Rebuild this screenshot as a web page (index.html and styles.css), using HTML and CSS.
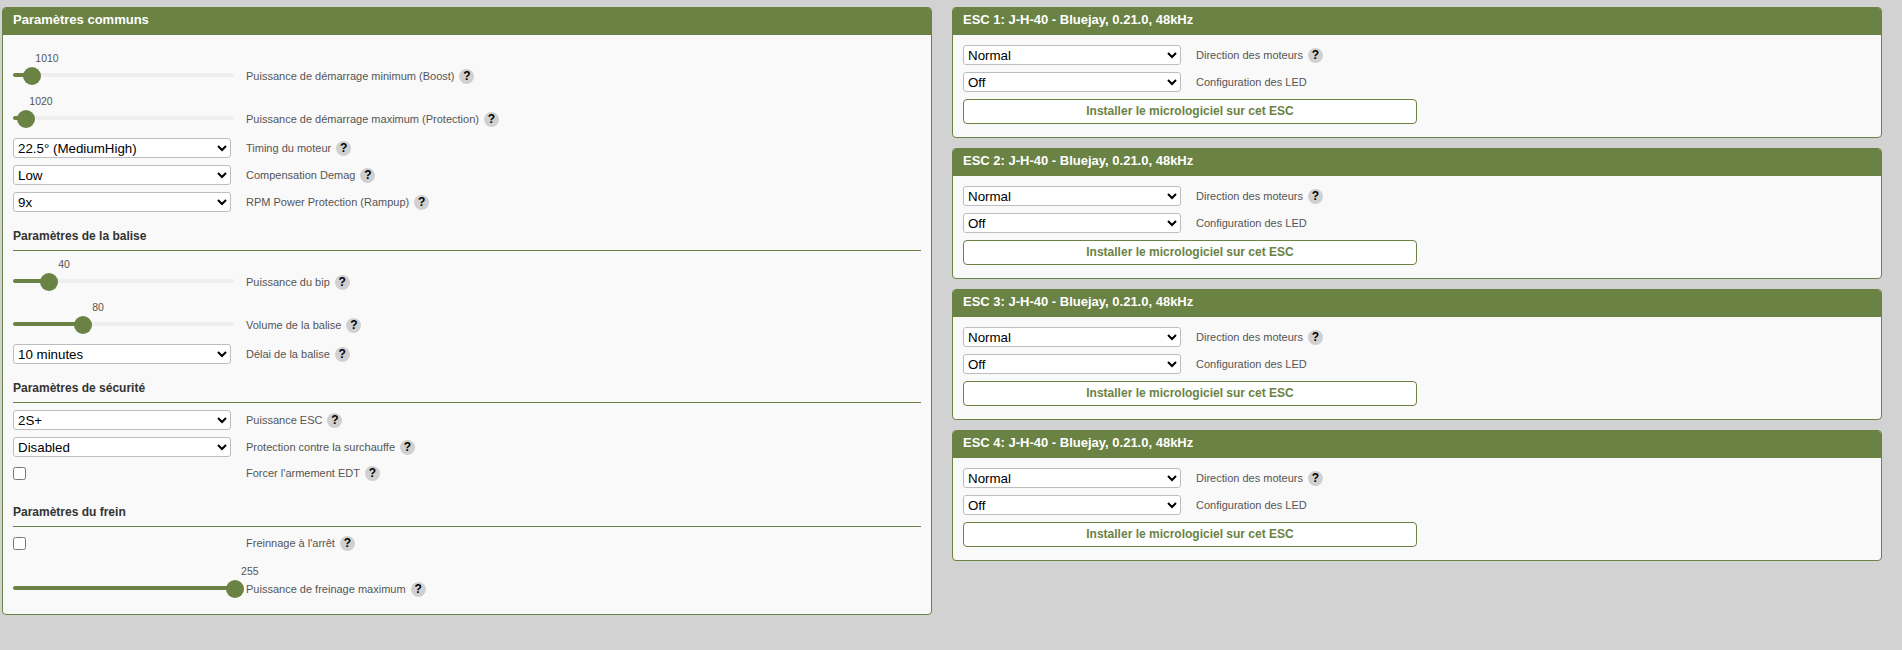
FILE: index.html
```html
<!DOCTYPE html>
<html lang="fr">
<head>
<meta charset="utf-8">
<title>Paramètres ESC</title>
<link rel="stylesheet" href="styles.css">
</head>
<body>
<main class="page">
  <section class="box">
    <h2 class="box-title">Paramètres communs</h2>
    <div class="box-body common">
      <div class="row row-slider"><div class="slider"><div class="track"></div><div class="fill" style="width:8.6%"></div><div class="thumb" style="left:8.6%"><span class="value">1010</span></div></div><span class="label">Puissance de démarrage minimum (Boost)</span><span class="help">?</span></div>
      <div class="row row-slider"><div class="slider"><div class="track"></div><div class="fill" style="width:5.9%"></div><div class="thumb" style="left:5.9%"><span class="value">1020</span></div></div><span class="label">Puissance de démarrage maximum (Protection)</span><span class="help">?</span></div>
      <div class="row"><select class="select"><option>22.5° (MediumHigh)</option></select><span class="label">Timing du moteur</span><span class="help">?</span></div>
      <div class="row"><select class="select"><option>Low</option></select><span class="label">Compensation Demag</span><span class="help">?</span></div>
      <div class="row"><select class="select"><option>9x</option></select><span class="label">RPM Power Protection (Rampup)</span><span class="help">?</span></div>

      <h3 class="section-title">Paramètres de la balise</h3>
      <div class="row row-slider"><div class="slider"><div class="track"></div><div class="fill" style="width:16.3%"></div><div class="thumb" style="left:16.3%"><span class="value">40</span></div></div><span class="label">Puissance du bip</span><span class="help">?</span></div>
      <div class="row row-slider"><div class="slider"><div class="track"></div><div class="fill" style="width:31.7%"></div><div class="thumb" style="left:31.7%"><span class="value">80</span></div></div><span class="label">Volume de la balise</span><span class="help">?</span></div>
      <div class="row"><select class="select"><option>10 minutes</option></select><span class="label">Délai de la balise</span><span class="help">?</span></div>

      <h3 class="section-title">Paramètres de sécurité</h3>
      <div class="row"><select class="select"><option>2S+</option></select><span class="label">Puissance ESC</span><span class="help">?</span></div>
      <div class="row"><select class="select"><option>Disabled</option></select><span class="label">Protection contre la surchauffe</span><span class="help">?</span></div>
      <div class="row row-check"><div class="check-cell"><input class="check" type="checkbox"></div><span class="label">Forcer l'armement EDT</span><span class="help">?</span></div>

      <h3 class="section-title">Paramètres du frein</h3>
      <div class="row row-check"><div class="check-cell"><input class="check" type="checkbox"></div><span class="label">Freinnage à l'arrêt</span><span class="help">?</span></div>
      <div class="row row-slider"><div class="slider"><div class="track"></div><div class="fill" style="width:100%"></div><div class="thumb" style="left:100.4%"><span class="value">255</span></div></div><span class="label">Puissance de freinage maximum</span><span class="help">?</span></div>
    </div>
  </section>

  <div class="esc-column">
    <section class="box esc">
      <h2 class="box-title">ESC 1: J-H-40 - Bluejay, 0.21.0, 48kHz</h2>
      <div class="box-body">
        <div class="row"><select class="select"><option>Normal</option></select><span class="label">Direction des moteurs</span><span class="help">?</span></div>
        <div class="row"><select class="select"><option>Off</option></select><span class="label">Configuration des LED</span></div>
        <button class="flash" type="button">Installer le micrologiciel sur cet ESC</button>
      </div>
    </section>
    <section class="box esc">
      <h2 class="box-title">ESC 2: J-H-40 - Bluejay, 0.21.0, 48kHz</h2>
      <div class="box-body">
        <div class="row"><select class="select"><option>Normal</option></select><span class="label">Direction des moteurs</span><span class="help">?</span></div>
        <div class="row"><select class="select"><option>Off</option></select><span class="label">Configuration des LED</span></div>
        <button class="flash" type="button">Installer le micrologiciel sur cet ESC</button>
      </div>
    </section>
    <section class="box esc">
      <h2 class="box-title">ESC 3: J-H-40 - Bluejay, 0.21.0, 48kHz</h2>
      <div class="box-body">
        <div class="row"><select class="select"><option>Normal</option></select><span class="label">Direction des moteurs</span><span class="help">?</span></div>
        <div class="row"><select class="select"><option>Off</option></select><span class="label">Configuration des LED</span></div>
        <button class="flash" type="button">Installer le micrologiciel sur cet ESC</button>
      </div>
    </section>
    <section class="box esc">
      <h2 class="box-title">ESC 4: J-H-40 - Bluejay, 0.21.0, 48kHz</h2>
      <div class="box-body">
        <div class="row"><select class="select"><option>Normal</option></select><span class="label">Direction des moteurs</span><span class="help">?</span></div>
        <div class="row"><select class="select"><option>Off</option></select><span class="label">Configuration des LED</span></div>
        <button class="flash" type="button">Installer le micrologiciel sur cet ESC</button>
      </div>
    </section>
  </div>
</main>
</body>
</html>
```
FILE: styles.css
```css
* { box-sizing: border-box; }

html, body {
  margin: 0;
  height: 100%;
  overflow: hidden;
}

body {
  background: #d2d2d2;
  font-family: "Liberation Sans", Arial, sans-serif;
  color: #555;
}

.page {
  display: grid;
  grid-template-columns: 930px 930px;
  column-gap: 20px;
  align-items: start;
  padding: 7px 0 0 2px;
}

.box {
  border: 1px solid #6a8244;
  border-radius: 4px;
  background: #f9f9f9;
  overflow: hidden;
}

.box-title {
  margin: -1px -1px 0;
  height: 28px;
  padding: 0 11px;
  background: #6a8244;
  color: #fff;
  font-size: 13px;
  font-weight: 700;
  line-height: 26px;
}

.box-body {
  display: flex;
  flex-direction: column;
  padding: 10px 10px 13px;
}

.common {
  padding: 17px 10px 6px;
}

.esc-column {
  display: flex;
  flex-direction: column;
  gap: 10px;
}

.esc {
  height: 131px;
}

.row {
  display: flex;
  flex: none;
  align-items: center;
  height: 20px;
  margin-bottom: 7px;
}

.row-slider {
  height: 24px;
  margin-top: 12px;
}

.row-check {
  height: 18px;
  margin-bottom: 13px;
}

.select {
  width: 218px;
  height: 20px;
  margin-right: 15px;
  flex: none;
  border: 1px solid #bdbdbd;
  border-radius: 3px;
  background-color: #fff;
  color: #000;
  font-family: "Liberation Sans", Arial, sans-serif;
  font-size: 13.33px;
}

.slider {
  position: relative;
  width: 221px;
  height: 24px;
  margin-right: 12px;
  flex: none;
}

.track,
.fill {
  position: absolute;
  top: 9px;
  left: 0;
  height: 4px;
  border-radius: 2px;
}

.track {
  width: 100%;
  background: #eee;
}

.fill {
  background: #6a8244;
}

.thumb {
  position: absolute;
  top: 3px;
  width: 18px;
  height: 18px;
  margin-left: -9px;
  border-radius: 50%;
  background: #6a8244;
}

.value {
  position: absolute;
  top: -16px;
  left: 24px;
  transform: translateX(-50%);
  font-size: 10.5px;
  line-height: 14px;
  color: #555;
}

.label {
  font-size: 11px;
  line-height: 14px;
  color: #555;
}

.help {
  display: flex;
  align-items: center;
  justify-content: center;
  flex: none;
  width: 15px;
  height: 15px;
  margin-left: 5px;
  border-radius: 50%;
  background: #d0d0d0;
  color: #000;
  font-size: 12px;
  font-weight: 700;
}

.check-cell {
  width: 233px;
  flex: none;
  display: flex;
}

.check {
  width: 13px;
  height: 13px;
  margin: 0;
}

.section-title {
  flex: none;
  margin: 0 0 7px;
  height: 32px;
  padding-top: 10px;
  border-bottom: 1px solid #6a8244;
  color: #333;
  font-size: 12px;
  font-weight: 700;
  line-height: 14px;
}

.flash {
  display: block;
  flex: none;
  width: 454px;
  height: 25px;
  padding: 0 0 2px;
  border: 1px solid #6a8244;
  border-radius: 4px;
  background: #fff;
  color: #6a8244;
  font-family: "Liberation Sans", Arial, sans-serif;
  font-size: 12px;
  font-weight: 700;
}
```
